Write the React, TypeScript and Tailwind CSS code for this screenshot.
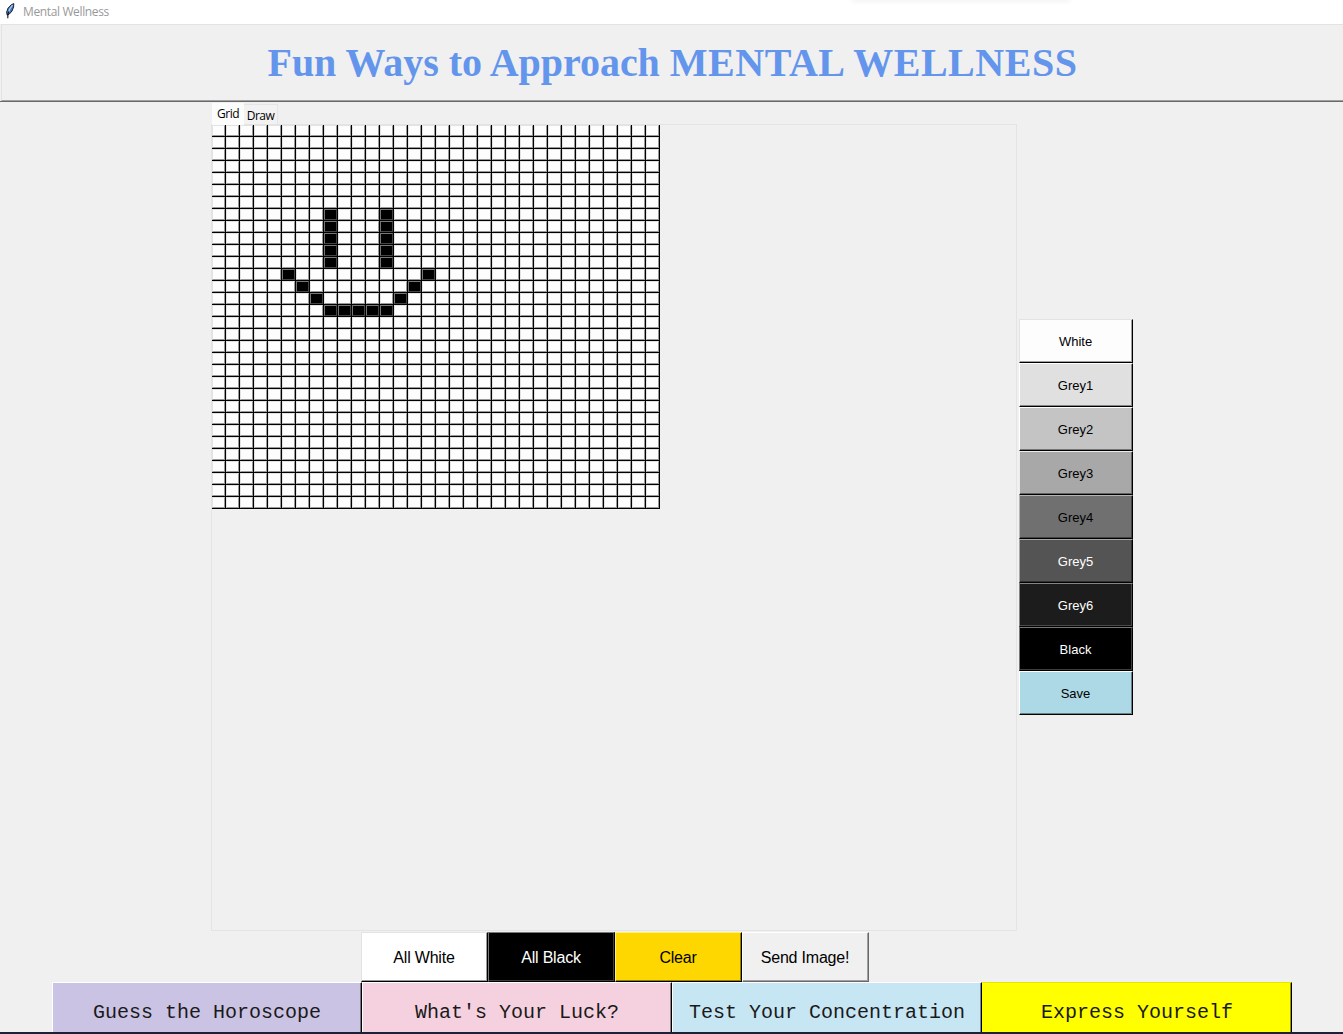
import { useState } from 'react';

const COLUMNS = 32;
const ROWS = 32;

const SMILE = new Set<string>([
  ...[7, 8, 9, 10, 11].flatMap((row) => [`${row}-8`, `${row}-12`]),
  '12-5', '12-15', '13-6', '13-14', '14-7', '14-13',
  '15-8', '15-9', '15-10', '15-11', '15-12',
]);

const SWATCHES = [
  { label: 'White', face: 'bg-[#fdfdfd] text-black border-t-[#e3e3e3] border-l-[#e3e3e3]', shade: 'border-[#a0a0a0]' },
  { label: 'Grey1', face: 'bg-[#e0e0e0] text-black border-t-white border-l-white', shade: 'border-[#868686]' },
  { label: 'Grey2', face: 'bg-[#c4c4c4] text-black border-t-white border-l-white', shade: 'border-[#757575]' },
  { label: 'Grey3', face: 'bg-[#a8a8a8] text-black border-t-[#ececec] border-l-[#ececec]', shade: 'border-[#646464]' },
  { label: 'Grey4', face: 'bg-[#707070] text-black border-t-[#b4b4b4] border-l-[#b4b4b4]', shade: 'border-[#434343]' },
  { label: 'Grey5', face: 'bg-[#545454] text-white border-t-[#a6a6a6] border-l-[#a6a6a6]', shade: 'border-[#323232]' },
  { label: 'Grey6', face: 'bg-[#1c1c1c] text-white border-t-[#858585] border-l-[#858585]', shade: 'border-[#4a4a4a]' },
  { label: 'Black', face: 'bg-black text-white border-t-[#777777] border-l-[#777777]', shade: 'border-[#3f3f3f]' },
  { label: 'Save', face: 'bg-[#add8e6] text-black border-t-white border-l-white', shade: 'border-[#67818a]' },
];

const ACTIONS = [
  { label: 'All White', face: 'bg-white text-black border-t-[#e3e3e3] border-l-[#e3e3e3] border-r-black border-b-black', shade: 'border-[#999999]' },
  { label: 'All Black', face: 'bg-black text-white border-t-[#777777] border-l-[#777777] border-r-black border-b-black', shade: 'border-[#3f3f3f]' },
  { label: 'Clear', face: 'bg-[#ffd700] text-black border-t-[#fff27a] border-l-[#fff27a] border-r-black border-b-black', shade: 'border-[#998100]' },
  { label: 'Send Image!', face: 'bg-[#f0f0f0] text-black border-t-white border-l-white border-r-[#696969] border-b-[#696969]', shade: 'border-[#a0a0a0]' },
];

const PAGES = [
  { label: 'Guess the Horoscope', face: 'bg-[#cbc3e3] border-t-white border-l-white', shade: 'border-[#797588]' },
  { label: "What's Your Luck?", face: 'bg-[#f5d1df] border-t-white border-l-white', shade: 'border-[#937d86]' },
  { label: 'Test Your Concentration', face: 'bg-[#c7e6f3] border-t-white border-l-white', shade: 'border-[#778a92]' },
  { label: 'Express Yourself', face: 'bg-[#ffff00] border-t-[#e6e600] border-l-[#ffff00]', shade: 'border-[#999900]' },
];

function Feather() {
  return (
    <svg className="h-4 w-4 shrink-0" viewBox="0 0 16 16" fill="none">
      <path d="M10.8.6 8.2 1.8 5 5.2 3.6 9.2 4.2 12.2 6.4 11 9 8 10.6 4z" fill="#3f78c8" stroke="#151515" strokeWidth="0.9" />
      <path d="M9.6 2 6.8 6 5.4 9.6" stroke="#a9ccf5" strokeWidth="1.3" />
      <path d="M5.8 8.4 4.9 11.4 4.8 15.2" stroke="#111" strokeWidth="1.1" />
    </svg>
  );
}

export default function App() {
  const [filled, setFilled] = useState(SMILE);

  const paint = (key: string) => setFilled((current) => new Set(current).add(key));

  return (
    <div className="flex h-[1034px] w-full flex-col overflow-hidden bg-[#f0f0f0]">
      <div className="flex h-6 shrink-0 items-start justify-between bg-white">
        <div className="flex items-start pt-[3px] pl-[3px]">
          <Feather />
          <span className="mt-px ml-1 font-['Open_Sans',sans-serif] text-[12px] leading-4 tracking-[-0.37px] whitespace-nowrap text-[#999999]">
            Mental Wellness
          </span>
        </div>
        <div className="mr-[274px] h-0 w-[216px] shadow-[0_0_5px_1px_#e4e4e4]" />
      </div>

      <header className="h-[78px] shrink-0 border-b border-[#696969] pl-px">
        <div className="flex h-full items-center justify-center border-t border-b border-l border-t-[#e3e3e3] border-b-[#a0a0a0] border-l-[#e3e3e3]">
          <h1 className="font-['Liberation_Serif',serif] text-[40px] leading-none font-bold tracking-[-0.04px] whitespace-nowrap text-[#6495ed]">
            Fun Ways to Approach <span className="tracking-[0.53px]">MENTAL WELLNESS</span>
          </h1>
        </div>
      </header>

      <main className="flex h-[830px] shrink-0 gap-[2px] pt-px pl-[211px]">
        <section className="flex w-[806px] flex-col">
          <div className="flex h-[21px] items-end pl-px font-['Open_Sans',sans-serif] text-[12px] tracking-[-0.5px] text-black">
            <div className="z-10 -mb-px flex h-[22px] w-8 items-center justify-center bg-[#fcfcfc]">Grid</div>
            <div className="flex h-5 w-[34px] items-center justify-center border-t border-r border-[#e5e5e5] bg-[#f2f2f2] pt-0.5">Draw</div>
          </div>
          <div className="h-[807px] border border-[#e4e4e4]">
            <div className="grid w-[448px] grid-cols-[repeat(32,14px)] auto-rows-[12px] bg-black">
              {Array.from({ length: ROWS * COLUMNS }, (_, i) => {
                const key = `${Math.floor(i / COLUMNS)}-${i % COLUMNS}`;
                return (
                  <div
                    key={key}
                    onClick={() => paint(key)}
                    className={
                      filled.has(key)
                        ? 'mr-px mb-px border border-t-[#777777] border-r-[#444444] border-b-[#444444] border-l-[#777777] bg-black'
                        : 'mr-px mb-px border border-t-[#e3e3e3] border-r-[#989898] border-b-[#989898] border-l-[#e3e3e3] bg-[#fdfdfd]'
                    }
                  />
                );
              })}
            </div>
          </div>
        </section>

        <aside className="mt-[216px] flex w-[114px] flex-col">
          {SWATCHES.map(({ label, face, shade }) => (
            <button key={label} className={`h-11 border border-r-black border-b-black font-['Liberation_Sans',sans-serif] text-[13px] ${face}`}>
              <span className={`flex h-full items-center justify-center border-r border-b pt-[3px] ${shade}`}>{label}</span>
            </button>
          ))}
        </aside>
      </main>

      <div className="grid h-[50px] shrink-0 grid-cols-[repeat(4,127px)] pl-[361px]">
        {ACTIONS.map(({ label, face, shade }) => (
          <button key={label} className={`border font-['Liberation_Sans',sans-serif] text-[16px] tracking-[-0.2px] ${face}`}>
            <span className={`flex h-full items-center justify-center border-r border-b pt-0.5 ${shade}`}>{label}</span>
          </button>
        ))}
      </div>

      <nav className="grid h-[50px] shrink-0 grid-cols-[repeat(4,310px)] pl-[52px]">
        {PAGES.map(({ label, face, shade }) => (
          <button key={label} className={`border-t border-r border-l border-r-black font-['Liberation_Mono',monospace] text-[20px] text-[#1a1a1a] ${face}`}>
            <span className={`flex h-full items-center justify-center border-r pt-[11px] pl-px ${shade}`}>{label}</span>
          </button>
        ))}
      </nav>
      <div className="h-0.5 shrink-0 bg-[#1e2136]" />
    </div>
  );
}
